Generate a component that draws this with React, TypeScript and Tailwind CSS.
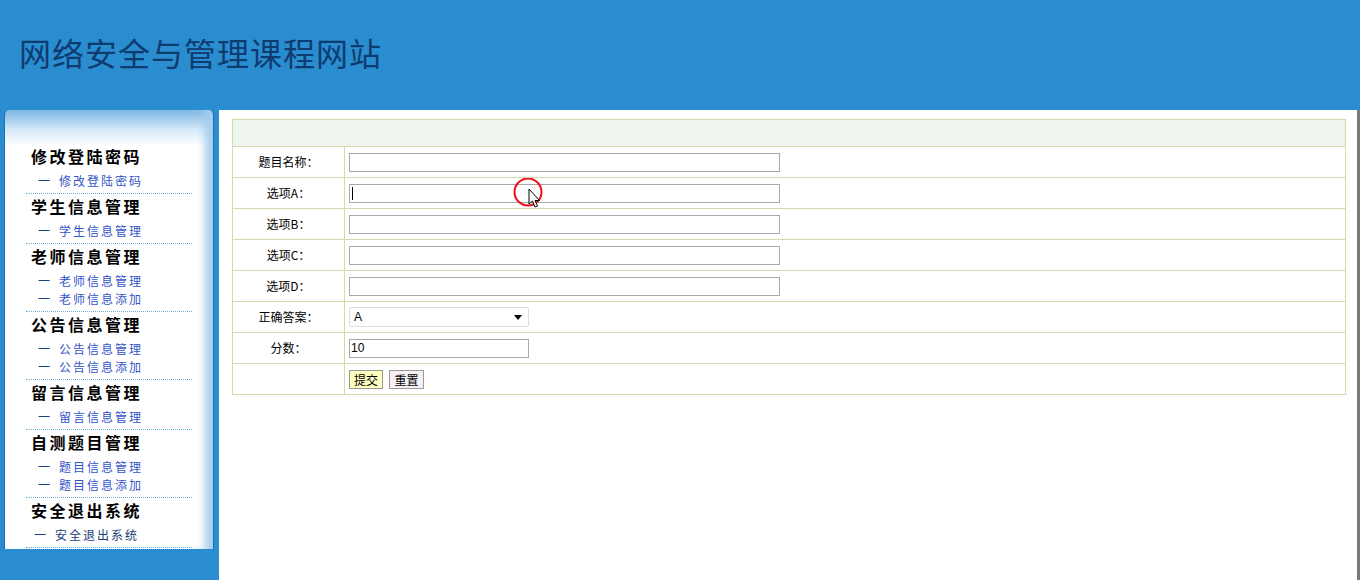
import React from 'react';

const menu = [
  { title: '修改登陆密码', items: ['修改登陆密码'] },
  { title: '学生信息管理', items: ['学生信息管理'] },
  { title: '老师信息管理', items: ['老师信息管理', '老师信息添加'] },
  { title: '公告信息管理', items: ['公告信息管理', '公告信息添加'] },
  { title: '留言信息管理', items: ['留言信息管理'] },
  { title: '自测题目管理', items: ['题目信息管理', '题目信息添加'] },
];

const cjk = "font-['SimSun','Noto_Sans_CJK_SC',sans-serif]";

const Sidebar = () => (
  <div className="w-[210px] h-[439px] rounded-t-[5px] border-l border-r border-[#1f6fae] bg-[linear-gradient(to_bottom,#7db6e4_0px,#d6eaf8_20px,#ffffff_36px)] shadow-[inset_-12px_0_8px_-4px_#a3cdef] pt-[34px]">
    {menu.map((g) => (
      <div key={g.title}>
        <div className={`pl-[26px] h-[28px] leading-[24px] text-[16px] font-bold tracking-[2.5px] text-black ${cjk}`}>
          {g.title}
        </div>
        <div className="pb-[3px]">
          {g.items.map((it) => (
            <div key={it} className={`flex items-center h-[18px] pl-[33px] text-[12px] ${cjk}`}>
              <span className="w-[21px] text-[#1c3d7a]">一</span>
              <span className="tracking-[2px] text-[#3355c8]">{it}</span>
            </div>
          ))}
        </div>
        <div className="ml-[21px] w-[166px] border-t border-dotted border-[#6fb0e0]" />
      </div>
    ))}
    <div>
      <div className={`pl-[26px] h-[28px] leading-[24px] text-[16px] font-bold tracking-[2.5px] text-black ${cjk}`}>
        安全退出系统
      </div>
      <div className={`flex items-center h-[18px] pl-[29px] text-[12px] ${cjk}`}>
        <span className="w-[21px] text-[#1c3d7a]">一</span>
        <span className="tracking-[2px] text-[#1c3d7a]">安全退出系统</span>
      </div>
      <div className="mt-[3px] ml-[21px] w-[166px] border-t border-dotted border-[#6fb0e0]" />
    </div>
  </div>
);

const rows = ['题目名称：', '选项A：', '选项B：', '选项C：', '选项D：'];

export default function App() {
  return (
    <div className={`w-[1360px] min-h-[580px] bg-[#2a8dcf] ${cjk}`}>
      <div className="h-[110px] flex items-center pl-[19px] pb-[6px]">
        <h1 className="text-[32px] text-[#0e3b70] font-['Noto_Sans_CJK_SC',sans-serif] font-normal tracking-[1px]">
          网络安全与管理课程网站
        </h1>
      </div>
      <div className="flex h-[470px]">
        <div className="w-[219px] pl-[4px]">
          <Sidebar />
        </div>
        <div className="relative flex-1 bg-white border-r-[3px] border-[#7a7a7a] pt-[9px] pl-[13px] pr-[11px]">
          <table className="w-full border-collapse text-[12px] text-black">
            <tbody>
              <tr>
                <td colSpan={2} className="h-[27px] bg-[#eef5ee] border border-[#d1dcae]"></td>
              </tr>
              {rows.map((r, i) => (
                <tr key={r}>
                  <td className="w-[112px] h-[31px] border border-[#d1dcae] text-center">{r}</td>
                  <td className="border border-[#d1dcae] pl-[4px]">
                    <div className="relative w-[431px] h-[19px] border border-[#a9a9a9] bg-white">
                      {i === 1 && <div className="absolute left-[2px] top-[2px] w-px h-[13px] bg-black" />}
                    </div>
                  </td>
                </tr>
              ))}
              <tr>
                <td className="h-[31px] border border-[#d1dcae] text-center">正确答案：</td>
                <td className="border border-[#d1dcae] pl-[4px]">
                  <div className="flex items-center justify-between w-[180px] h-[20px] border border-[#dcdcdc] rounded-[2px] bg-white pl-[4px] pr-[6px]">
                    <span className="font-['Liberation_Sans',sans-serif] text-[12px]">A</span>
                    <svg width="8" height="5" viewBox="0 0 8 5"><path d="M0 0h8L4 5z" fill="#000" /></svg>
                  </div>
                </td>
              </tr>
              <tr>
                <td className="h-[31px] border border-[#d1dcae] text-center">分数：</td>
                <td className="border border-[#d1dcae] pl-[4px]">
                  <div className="w-[180px] h-[19px] border border-[#a9a9a9] bg-white pl-[1px] leading-[17px] font-['Liberation_Sans',sans-serif] text-[12px]">10</div>
                </td>
              </tr>
              <tr>
                <td className="h-[31px] border border-[#d1dcae]"></td>
                <td className="border border-[#d1dcae] pl-[4px]">
                  <div className="flex gap-[6px]">
                    <button className="w-[34px] h-[19px] border border-[#999] bg-[#ffffc0] text-[12px] leading-[17px]">提交</button>
                    <button className="w-[35px] h-[19px] border border-[#999] bg-[#f6f0f6] text-[12px] leading-[17px]">重置</button>
                  </div>
                </td>
              </tr>
            </tbody>
          </table>
          <svg className="absolute left-[294px] top-[68px]" width="32" height="36" viewBox="0 0 32 36">
            <circle cx="15" cy="14" r="13.5" fill="none" stroke="#ee1111" strokeWidth="2" />
            <path d="M16 11 L16 26 L19.5 23 L22 29 L24.5 28 L22 22.5 L26.5 22.5 Z" fill="#fff" stroke="#000" strokeWidth="1" />
          </svg>
        </div>
      </div>
    </div>
  );
}
